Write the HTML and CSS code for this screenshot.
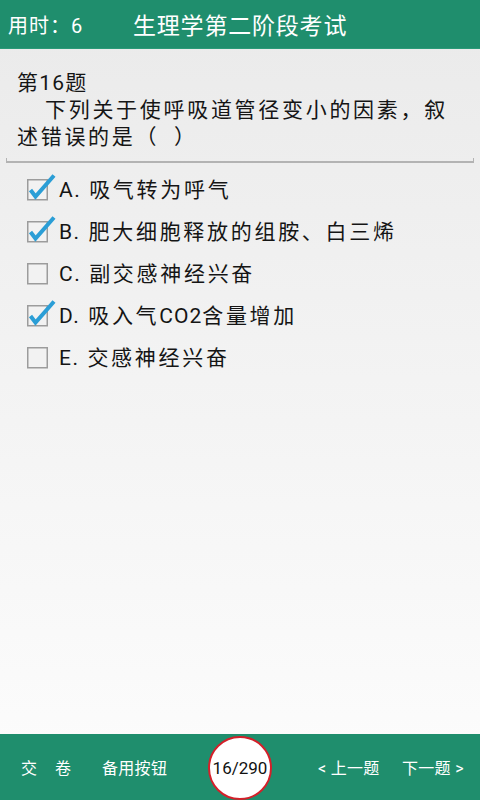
FILE: index.html
```html
<!DOCTYPE html>
<html lang="zh-CN">
<head>
<meta charset="utf-8">
<title>生理学第二阶段考试</title>
<link rel="stylesheet" href="styles.css">
</head>
<body>
<div class="app">
  <header class="topbar">
    <span class="timer">用时<span class="punct">：</span>6</span>
    <span class="title">生理学第二阶段考试</span>
  </header>
  <main class="content">
    <section class="question">
      <div class="qno">第16题</div>
      <p class="qtext">下列关于使呼吸道管径变小的因素<span class="punct">，</span>叙述错误的是<span class="punct">（&nbsp;&nbsp;）</span></p>
    </section>
    <div class="divider"></div>
    <ul class="options">
      <li class="option">
        <svg class="cb" width="32" height="30" viewBox="0 0 32 30"><rect class="box" x="2.75" y="8.75" width="19.5" height="20" /><path class="tick" d="M5.5 19 L10.5 25.5 L29 4.5" /></svg>
        <span class="label"><span class="key">A.</span> 吸气转为呼气</span>
      </li>
      <li class="option">
        <svg class="cb" width="32" height="30" viewBox="0 0 32 30"><rect class="box" x="2.75" y="8.75" width="19.5" height="20" /><path class="tick" d="M5.5 19 L10.5 25.5 L29 4.5" /></svg>
        <span class="label"><span class="key">B.</span> 肥大细胞释放的组胺、白三烯</span>
      </li>
      <li class="option">
        <svg class="cb" width="32" height="30" viewBox="0 0 32 30"><rect class="box" x="2.75" y="8.75" width="19.5" height="20" /></svg>
        <span class="label"><span class="key">C.</span> 副交感神经兴奋</span>
      </li>
      <li class="option">
        <svg class="cb" width="32" height="30" viewBox="0 0 32 30"><rect class="box" x="2.75" y="8.75" width="19.5" height="20" /><path class="tick" d="M5.5 19 L10.5 25.5 L29 4.5" /></svg>
        <span class="label"><span class="key">D.</span> 吸入气<span class="latin">CO2</span>含量增加</span>
      </li>
      <li class="option">
        <svg class="cb" width="32" height="30" viewBox="0 0 32 30"><rect class="box" x="2.75" y="8.75" width="19.5" height="20" /></svg>
        <span class="label"><span class="key">E.</span> 交感神经兴奋</span>
      </li>
    </ul>
  </main>
  <footer class="bottombar">
    <span class="btn btn-submit">交　卷</span>
    <span class="btn btn-spare">备用按钮</span>
    <span class="counter">16/290</span>
    <span class="btn btn-prev">&lt; 上一题</span>
    <span class="btn btn-next">下一题 &gt;</span>
  </footer>
</div>
</body>
</html>
```
FILE: styles.css
```css
* { box-sizing: border-box; }
html, body { margin: 0; padding: 0; }
body {
  width: 480px;
  height: 800px;
  overflow: hidden;
  font-family: Roboto, "Noto Sans CJK SC", sans-serif;
  color: #151515;
}
.punct {
  font-family: "Noto Sans CJK TC", "Noto Sans CJK SC", sans-serif;
  line-height: 0;
}
.app {
  width: 480px;
  height: 800px;
  display: flex;
  flex-direction: column;
  background: linear-gradient(#eaeaea, #fdfdfd);
}
.topbar {
  height: 49px;
  flex: none;
  background: #1f8e6d;
  color: #fff;
  display: flex;
  align-items: center;
  padding-left: 8px;
  border-bottom: 1px solid #2a9a78;
}
.timer {
  width: 125px;
  font-size: 20px;
  letter-spacing: 1px;
}
.title {
  font-size: 23px;
  letter-spacing: 0.8px;
}
.content {
  flex: 1;
}
.question {
  padding: 21px 15px 0 17px;
  font-size: 21px;
  line-height: 27px;
  letter-spacing: 2.7px;
}
.qno { letter-spacing: 1.2px; }
.qtext {
  margin: 0;
  text-indent: 28px;
}
.divider {
  margin: 7px 6px 0 6px;
  height: 5px;
  border: 2px solid #b3b3b3;
  border-top: none;
  border-left-width: 1.5px;
  border-right-width: 1.5px;
}
.options {
  list-style: none;
  margin: 5px 0 0 0;
  padding: 0;
}
.option {
  height: 42px;
  display: flex;
  align-items: center;
  padding-left: 25px;
}
.cb {
  flex: none;
  margin-top: -6px;
  margin-right: 2px;
}
.box {
  fill: #f2f2f2;
  stroke: #9c9c9c;
  stroke-width: 1.5;
}
.tick {
  fill: none;
  stroke: #2b9ed6;
  stroke-width: 4;
  stroke-linejoin: miter;
  stroke-linecap: butt;
}
.label {
  font-size: 21px;
  letter-spacing: 2.7px;
  line-height: 42px;
  padding-top: 1px;
}
.key { letter-spacing: 1.5px; }
.latin { letter-spacing: 1px; }
.bottombar {
  height: 66px;
  flex: none;
  background: #1f8e6d;
  color: #fff;
  display: flex;
  align-items: center;
  padding-left: 21px;
}
.btn {
  font-size: 16px;
  letter-spacing: 0.3px;
}
.btn-submit { width: 81px; letter-spacing: 1px; }
.btn-spare { width: 106px; }
.counter {
  width: 64px;
  height: 64px;
  flex: none;
  border-radius: 50%;
  background: #fff;
  border: 2px solid #d4202a;
  color: #111;
  font-size: 17px;
  display: flex;
  align-items: center;
  justify-content: center;
  margin-top: 1px;
}
.btn-prev { margin-left: 46px; width: 84px; }
```
